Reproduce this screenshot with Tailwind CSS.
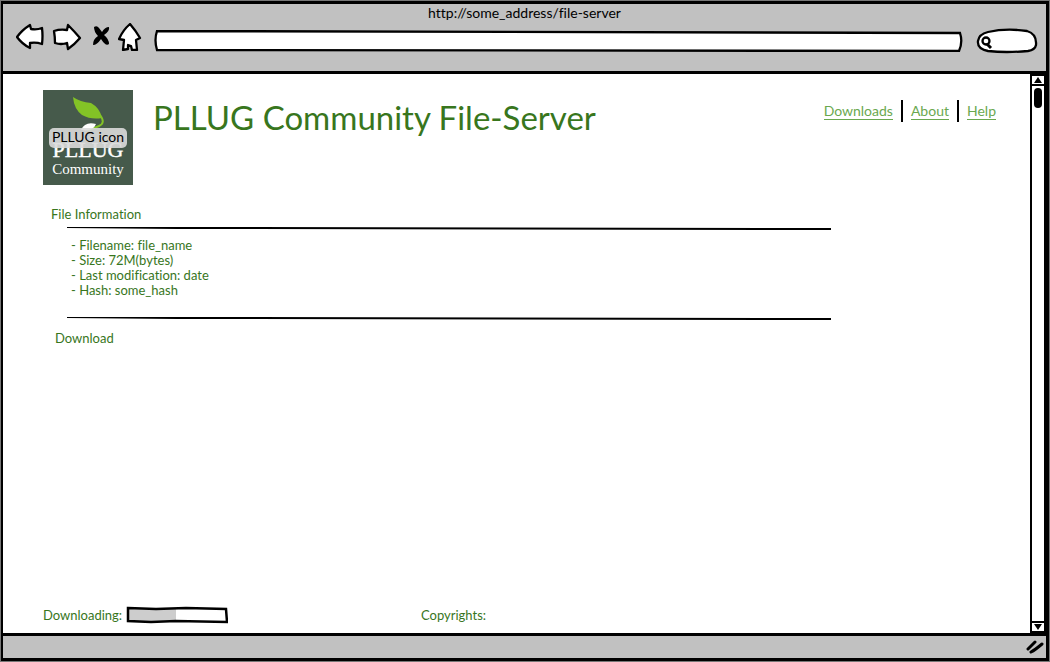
<!DOCTYPE html>
<html lang="en">
<head>
<meta charset="utf-8">
<title>PLLUG Community File-Server</title>
<script src="https://cdn.jsdelivr.net/npm/@tailwindcss/browser@4"></script>
</head>
<body class="bg-white font-['Lato',sans-serif] text-[13px] leading-4 [font-variant-ligatures:none]">
<div class="flex min-h-screen flex-col bg-[#777] p-px">
<div class="flex flex-1 flex-col border-[3px] border-l-2 border-black bg-white">
  <header class="flex flex-col border-b-[3px] border-black bg-[#c1c1c1] pb-3">
    <p class="pt-px text-center text-[14px] text-black">http://some_address/file-server</p>
    <div class="flex items-center pt-0.5 pr-2 pl-[13px]">
      <div class="flex items-center pb-2">
        <button type="button" aria-label="Back"><svg class="block" width="28" height="28" viewBox="0 0 28 28" fill="#fff" stroke="#000" stroke-width="2.3" stroke-linejoin="round"><path d="M1 14Q6 7 14 2L15 6Q21 7 26 5Q27 13 26 21Q20 19 14 20V25Q6 21 1 14Z"/></svg></button>
        <button type="button" class="ml-2" aria-label="Forward"><svg class="block" width="30" height="28" viewBox="0 0 30 28" fill="#fff" stroke="#000" stroke-width="2.3" stroke-linejoin="round"><path d="M2 8Q8 6 15 7L16 2Q22 8 28 15Q23 21 16 26L15 20Q9 22 3 20Q3 14 2 8Z"/></svg></button>
        <button type="button" class="ml-2.5" aria-label="Stop"><svg class="block" width="18" height="28" viewBox="0 0 18 28" fill="#000"><path d="M2 4Q5 2 7 5L10 9Q13 4 17 4Q18 8 12 12Q17 16 17 21Q14 24 9 16Q5 22 1 22Q1 16 6 13Q2 9 2 4Z"/></svg></button>
        <button type="button" class="ml-2" aria-label="Home"><svg class="block" width="24" height="28" viewBox="0 0 24 28" fill="#fff" stroke="#000" stroke-width="2.3" stroke-linejoin="round"><path d="M12 1Q18 8 22 15L18 17 19 27H14L13 23 10 22V26L5 27 6 17 1 16Q5 7 12 1Z"/></svg></button>
      </div>
      <div class="ml-3 grid h-[22px] flex-1 items-center">
        <svg class="col-start-1 row-start-1 h-[22px] w-full" viewBox="0 0 810 22" preserveAspectRatio="none" fill="#fff" stroke="#000" stroke-width="2.3"><path d="M3 1Q300 1 807 3Q810 12 806 21Q400 20 3 20Q0 10 3 1Z"/></svg>
        <input type="text" aria-label="Address" class="col-start-1 row-start-1 mx-2 h-4 bg-transparent outline-none">
      </div>
      <div class="ml-[13px] grid h-[26px] w-[62px] items-center">
        <svg class="col-start-1 row-start-1" width="62" height="26" viewBox="0 0 62 26" fill="#fff" stroke="#000" stroke-width="2.3"><path d="M12 4Q30 0 51 3Q61 6 60 17Q59 22 52 23Q30 25 12 23Q1 21 2 13Q3 6 12 4Z"/><circle cx="10" cy="13" r="3.5"/><path d="M11 16 15 20" stroke-width="3"/></svg>
        <input type="search" aria-label="Search" class="col-start-1 row-start-1 mr-2 ml-5 h-4 min-w-0 bg-transparent outline-none">
      </div>
    </div>
  </header>

  <div class="flex flex-1">
    <main class="flex flex-1 flex-col pt-4 pb-[9px] pl-10 text-[#38761d]">
      <div class="flex items-start pr-[34px]">
        <div class="grid h-[95px] w-[90px] place-items-center bg-[#465a4b]">
          <svg class="col-start-1 row-start-1" width="90" height="95" viewBox="0 0 90 95" role="img" aria-label="PLLUG Community logo">
            <path d="M30 7Q37 12 48 13Q57 18 59 28Q48 30 39 25Q31 19 30 7Z" fill="#83c326"/><path d="M57 25Q63 33 56 36L44 41" fill="none" stroke="#83c326" stroke-width="2"/>
            <path d="M38 40Q42 31 53 34Q50 42 38 40Z" fill="#fff"/>
            <g fill="#fff" font-family="Liberation Serif, serif" text-anchor="middle"><text x="45" y="67" font-size="22" stroke="#fff" stroke-width=".4">PLLUG</text><text x="45" y="84" font-size="15">Community</text></g>
          </svg>
          <span class="z-10 col-start-1 row-start-1 rounded-[5px] bg-[#dadada]/90 px-[3px] pt-px pb-[3px] text-[14px] text-black">PLLUG icon</span>
        </div>
        <h1 class="ml-5 pt-[7px] text-[33px] leading-10">PLLUG Community File-Server</h1>
        <nav class="ml-auto flex items-center pt-2.5 text-[14px] text-[#6aa84f]">
          <a href="#" class="border-b border-[#6aa84f]">Downloads</a>
          <span class="mx-2 h-[22px] w-0.5 bg-black"></span>
          <a href="#" class="border-b border-[#6aa84f]">About</a>
          <span class="mx-2 h-[22px] w-0.5 bg-black"></span>
          <a href="#" class="border-b border-[#6aa84f]">Help</a>
        </nav>
      </div>
      <section class="pr-[199px]">
        <h2 class="mt-[21px] ml-2">File Information</h2>
        <svg class="mt-1 ml-6 block h-1 w-[calc(100%-24px)]" viewBox="0 0 764 4" preserveAspectRatio="none"><path d="M0 1 110 1 764 2V4L110 3 0 2Z"/></svg>
        <ul class="mt-2 ml-7 leading-[15px]">
          <li>- Filename: file_name</li>
          <li>- Size: 72M(bytes)</li>
          <li>- Last modification: date</li>
          <li>- Hash: some_hash</li>
        </ul>
        <svg class="mt-[18px] ml-6 block h-1 w-[calc(100%-24px)]" viewBox="0 0 764 4" preserveAspectRatio="none"><path d="M0 1 110 1 764 2V4L110 3 0 2Z"/></svg>
        <button type="button" class="mt-2.5 ml-3 block">Download</button>
      </section>
      <footer class="mt-auto grid grid-cols-[378px_1fr] items-center">
        <div class="flex items-center gap-1">
          <span id="progress">Downloading:</span>
          <svg role="progressbar" aria-labelledby="progress" aria-valuenow="49" width="102" height="18" viewBox="0 0 102 18"><path d="M2 2H99V16H2Z" fill="#fff"/><path d="M2 2H50V16H2Z" fill="#cdcdcd"/><path d="M2 2 30 3 60 2 100 3 101 16 50 15 25 16 2 15Z" fill="none" stroke="#000" stroke-width="2.5"/></svg>
        </div>
        <span>Copyrights:</span>
      </footer>
    </main>
    <div class="flex w-4 flex-col border-x-2 border-black">
      <button type="button" aria-label="Scroll up" class="flex h-3 items-center justify-center border-y-2 border-black"><svg width="8" height="6" viewBox="0 0 8 6"><path d="M4 0 8 6H0Z"/></svg></button>
      <div class="mx-auto mt-0.5 h-5 w-2 rounded-sm bg-black"></div>
      <button type="button" aria-label="Scroll down" class="mt-auto flex h-3 items-center justify-center border-y-2 border-black"><svg width="8" height="6" viewBox="0 0 8 6"><path d="M4 6 8 0H0Z"/></svg></button>
    </div>
  </div>

  <div class="flex h-[25px] items-center justify-end border-t-[3px] border-black bg-[#c1c1c1] pr-0.5">
    <svg width="18" height="14" viewBox="0 0 18 14" fill="none" stroke="#000" stroke-width="3" stroke-linecap="round"><path d="M2 9Q5 6 9 2M5 12Q9 10 16 4"/></svg>
  </div>
</div>
</div>
</body>
</html>
